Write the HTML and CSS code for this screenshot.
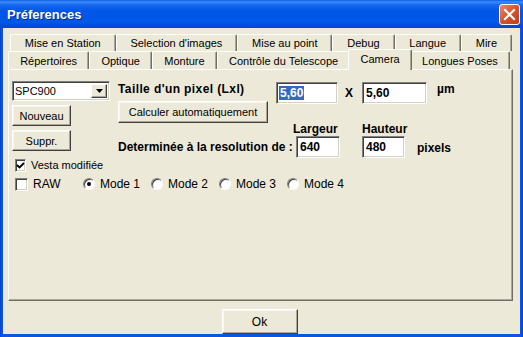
FILE: index.html
```html
<!DOCTYPE html>
<html lang="fr">
<head>
    <meta charset="UTF-8">
    <title>Préferences</title>
    <link rel="stylesheet" href="styles.css">
</head>
<body>
<div class="window">
    <div class="titlebar">
        <span class="title">Préferences</span>
        <span class="close">
            <svg width="13" height="13" viewBox="0 0 13 13"><path d="M2 2 L11 11 M11 2 L2 11" stroke="#fff" stroke-width="2.2" stroke-linecap="square"/></svg>
        </span>
    </div>
    <div class="client">
        <div class="tab-row back">
            <div class="tab">Mise en Station</div>
            <div class="tab">Selection d'images</div>
            <div class="tab">Mise au point</div>
            <div class="tab">Debug</div>
            <div class="tab">Langue</div>
            <div class="tab">Mire</div>
        </div>
        <div class="tab-row front">
            <div class="tab">Répertoires</div>
            <div class="tab">Optique</div>
            <div class="tab">Monture</div>
            <div class="tab">Contrôle du Telescope</div>
            <div class="tab active">Camera</div>
            <div class="tab">Longues Poses</div>
        </div>
        <div class="panel">
            <div class="top">
                <div class="left">
                    <div class="combo">
                        <span class="combo-text">SPC900</span>
                        <span class="combo-btn">
                            <svg width="7" height="4" viewBox="0 0 7 4"><path d="M0 0 H7 L3.5 4 Z" fill="#000"/></svg>
                        </span>
                    </div>
                    <div class="btn small">Nouveau</div>
                    <div class="btn small">Suppr.</div>
                </div>
                <div class="right">
                    <div class="row size-row">
                        <span class="label taille">Taille d'un pixel (Lxl)</span>
                        <span class="field w62"><span class="sel">5,60</span></span>
                        <span class="label times">X</span>
                        <span class="field w65">5,60</span>
                        <span class="label unit">µm</span>
                    </div>
                    <div class="btn calc">Calculer automatiquement</div>
                    <div class="row head-row">
                        <span class="label head-w">Largeur</span>
                        <span class="label">Hauteur</span>
                    </div>
                    <div class="row res-row">
                        <span class="label res">Determinée à la resolution de :</span>
                        <span class="field w44">640</span>
                        <span class="field w43">480</span>
                        <span class="label unit-px">pixels</span>
                    </div>
                </div>
            </div>
            <div class="check-row">
                <div class="opt">
                    <span class="box">
                        <svg width="9" height="9" viewBox="0 0 9 9"><path d="M1 4 L3.5 6.5 L8 2" fill="none" stroke="#000" stroke-width="1.8"/></svg>
                    </span>
                    <span>Vesta modifiée</span>
                </div>
            </div>
            <div class="check-row second">
                <div class="opt">
                    <span class="box"></span>
                    <span>RAW</span>
                </div>
                <div class="opt">
                    <span class="radio"><span class="dot"></span></span>
                    <span>Mode 1</span>
                </div>
                <div class="opt">
                    <span class="radio"></span>
                    <span>Mode 2</span>
                </div>
                <div class="opt">
                    <span class="radio"></span>
                    <span>Mode 3</span>
                </div>
                <div class="opt">
                    <span class="radio"></span>
                    <span>Mode 4</span>
                </div>
            </div>
        </div>
        <div class="footer">
            <div class="btn ok">Ok</div>
        </div>
    </div>
</div>
</body>
</html>
```
FILE: styles.css
```css
* {
    padding: 0;
    margin: 0;
    box-sizing: border-box;
}

body {
    width: 523px;
    height: 337px;
    overflow: hidden;
    font-family: "Liberation Sans", Arial, sans-serif;
    font-size: 11px;
    color: #000;
}

.window {
    width: 523px;
    height: 337px;
    display: flex;
    flex-direction: column;
    padding: 0 3px 3px;
    background: linear-gradient(to right, #0841c8, #0a55e4 2px, #0a55e4 calc(100% - 2px), #0841c8);
}

.titlebar {
    height: 29px;
    margin: 0 -3px;
    padding: 0 3px 0 7px;
    display: flex;
    align-items: center;
    justify-content: space-between;
    background: linear-gradient(#0a5ee8 0%, #3d8df8 7%, #1466ee 18%, #0056e6 40%, #0057e8 80%, #0046d2 100%);
}

.title {
    color: #fff;
    font-weight: bold;
    font-size: 13px;
    text-shadow: 1px 1px #0b2a8c;
}

.close {
    width: 21px;
    height: 21px;
    border: 1px solid #fff;
    border-radius: 3px;
    display: flex;
    align-items: center;
    justify-content: center;
    background: linear-gradient(135deg, #e98a6c, #d5532f 50%, #c13d17);
}

.client {
    flex: 1;
    background: #ece9d8;
    display: flex;
    flex-direction: column;
    padding-top: 6px;
}

.tab-row {
    display: flex;
}

.tab-row.back {
    height: 17px;
    margin: 0 8px 0 7px;
}

.tab-row.front {
    height: 18px;
    margin: 0 10px 0 5px;
}

.tab {
    flex: 1 0 auto;
    padding: 0 8px;
    display: flex;
    align-items: center;
    justify-content: center;
    white-space: nowrap;
    background: #ece9d8;
    border-top: 1px solid #fff;
    border-left: 1px solid #fff;
    border-right: 1px solid #716f64;
    box-shadow: inset -1px 0 #aca899;
    border-radius: 2px 2px 0 0;
}

.tab.active {
    position: relative;
    z-index: 1;
    align-self: flex-start;
    height: 21px;
    margin: -2px -2px -1px;
    padding-bottom: 3px;
}

.panel {
    height: 232px;
    margin: 0 7px 0 5px;
    padding: 11px 3px 0;
    border: 1px solid;
    border-color: #fff #716f64 #716f64 #fff;
    box-shadow: inset -1px -1px #aca899;
}

.top {
    display: flex;
}

.left {
    width: 98px;
    display: flex;
    flex-direction: column;
}

.combo {
    height: 20px;
    display: flex;
    background: #fff;
    border: 1px solid;
    border-color: #808080 #fff #fff #808080;
    box-shadow: inset 1px 1px #404040, inset -1px -1px #d4d0c8;
    padding: 2px;
}

.combo-text {
    flex: 1;
    line-height: 14px;
}

.combo-btn {
    width: 16px;
    display: flex;
    align-items: center;
    justify-content: center;
    background: #ece9d8;
    border: 1px solid;
    border-color: #fff #404040 #404040 #fff;
    box-shadow: inset -1px -1px #aca899;
}

.btn {
    display: flex;
    align-items: center;
    justify-content: center;
    background: #ece9d8;
    border: 1px solid;
    border-color: #fff #404040 #404040 #fff;
    box-shadow: inset -1px -1px #aca899, inset 1px 1px #f6f5ee;
    white-space: nowrap;
}

.btn.small {
    width: 59px;
    height: 21px;
    margin-top: 4px;
}

.right {
    margin-left: 8px;
    display: flex;
    flex-direction: column;
}

.row {
    display: flex;
    align-items: center;
}

.label {
    font-weight: bold;
    font-size: 12px;
    white-space: nowrap;
}

.size-row {
    height: 23px;
}

.taille {
    width: 158px;
    letter-spacing: 0.4px;
    margin-top: -7px;
}

.field {
    height: 22px;
    background: #fff;
    border: 1px solid;
    border-color: #808080 #fff #fff #808080;
    box-shadow: inset 1px 1px #404040, inset -1px -1px #d4d0c8;
    padding: 3px 3px 0;
    font-size: 12px;
    font-weight: bold;
    line-height: 15px;
}

.sel {
    background: #316ac5;
    color: #fff;
    padding: 0 1px;
    margin-left: -1px;
}

.w62 { width: 62px; }
.w65 { width: 65px; }
.w44 { width: 44px; }
.w43 { width: 43px; margin-left: 22px; }

.times {
    width: 24px;
    padding-left: 7px;
}

.unit {
    margin-left: 10px;
    margin-top: -7px;
}

.calc {
    width: 150px;
    height: 22px;
    margin-top: -3px;
}

.head-row {
    height: 13px;
    padding-left: 175px;
    line-height: 13px;
}

.head-w {
    width: 69px;
}

.res-row {
    height: 21px;
}

.res {
    width: 178px;
}

.unit-px {
    margin-left: 12px;
    margin-top: 3px;
}

.check-row {
    display: flex;
    align-items: center;
    height: 16px;
    padding-left: 3px;
    margin-top: 0;
}

.check-row.second {
    margin-top: 3px;
    font-size: 12px;
}

.opt {
    width: 68px;
    display: flex;
    align-items: center;
    gap: 5px;
    white-space: nowrap;
}

.box {
    width: 13px;
    height: 13px;
    display: flex;
    align-items: center;
    justify-content: center;
    background: #fff;
    border: 1px solid;
    border-color: #808080 #fff #fff #808080;
    box-shadow: inset 1px 1px #404040, inset -1px -1px #d4d0c8;
}

.radio {
    width: 12px;
    height: 12px;
    border-radius: 50%;
    display: flex;
    align-items: center;
    justify-content: center;
    background: #fff;
    border: 1px solid;
    border-color: #808080 #fff #fff #808080;
    box-shadow: inset 1px 1px #404040;
}

.dot {
    width: 4px;
    height: 4px;
    border-radius: 50%;
    background: #000;
}

.footer {
    flex: 1;
    display: flex;
    justify-content: center;
    padding: 8px 4px 0 0;
}

.ok {
    width: 76px;
    height: 25px;
    font-size: 12px;
}
```
